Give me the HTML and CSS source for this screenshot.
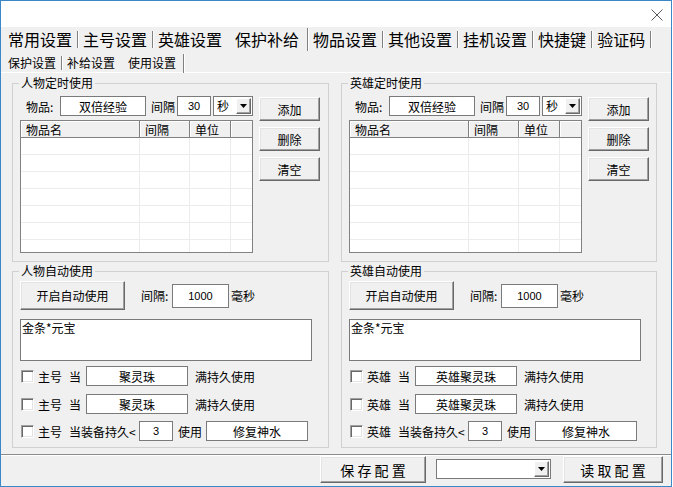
FILE: index.html
```html
<!DOCTYPE html>
<html lang="zh-CN">
<head>
    <meta charset="UTF-8">
    <title>保护补给</title>
    <link rel="stylesheet" href="styles.css">
</head>
<body>
<div class="window">
    <div class="titlebar">
        <span class="close-btn" title="关闭">
            <svg width="12" height="12" viewBox="0 0 12 12"><path d="M0.5 0.5L11.5 11.5M11.5 0.5L0.5 11.5" stroke="#5a5a5a" stroke-width="1" fill="none"/></svg>
        </span>
    </div>

    <div class="tabs main-tabs">
        <span class="tab">常用设置</span>
        <span class="tab">主号设置</span>
        <span class="tab before-active">英雄设置</span>
        <span class="tab active">保护补给</span>
        <span class="tab">物品设置</span>
        <span class="tab">其他设置</span>
        <span class="tab">挂机设置</span>
        <span class="tab">快捷键</span>
        <span class="tab">验证码</span>
    </div>
    <div class="tabs sub-tabs">
        <span class="tab">保护设置</span>
        <span class="tab before-active">补给设置</span>
        <span class="tab active">使用设置</span>
    </div>

    <div class="panel">
        <!-- 定时使用 -->
        <fieldset class="group">
            <legend>人物定时使用</legend>
            <div class="timed-body">
                <div class="timed-left">
                    <div class="item-row">
                        <label class="item-label">物品:</label>
                        <input class="edit item-name" type="text" value="双倍经验">
                        <span class="gap-label">间隔</span>
                        <input class="edit num small" type="text" value="30">
                        <div class="combo unit"><span class="combo-text">秒</span><span class="drop-btn"><svg width="7" height="4" viewBox="0 0 7 4"><path d="M0 0H7L3.5 4Z" fill="#000"/></svg></span></div>
                    </div>
                    <div class="listview">
                        <table>
                            <colgroup><col class="c-name"><col class="c-gap"><col class="c-unit"><col></colgroup>
                            <thead><tr><th>物品名</th><th>间隔</th><th>单位</th><th class="blank"></th></tr></thead>
                            <tbody>
                                <tr><td></td><td></td><td></td><td></td></tr>
                                <tr><td></td><td></td><td></td><td></td></tr>
                                <tr><td></td><td></td><td></td><td></td></tr>
                                <tr><td></td><td></td><td></td><td></td></tr>
                                <tr><td></td><td></td><td></td><td></td></tr>
                                <tr><td></td><td></td><td></td><td></td></tr>
                                <tr><td></td><td></td><td></td><td></td></tr>
                            </tbody>
                        </table>
                    </div>
                </div>
                <div class="btn-col">
                    <button class="btn">添加</button>
                    <button class="btn">删除</button>
                    <button class="btn">清空</button>
                </div>
            </div>
        </fieldset>

        <fieldset class="group">
            <legend>英雄定时使用</legend>
            <div class="timed-body">
                <div class="timed-left">
                    <div class="item-row">
                        <label class="item-label">物品:</label>
                        <input class="edit item-name" type="text" value="双倍经验">
                        <span class="gap-label">间隔</span>
                        <input class="edit num small" type="text" value="30">
                        <div class="combo unit"><span class="combo-text">秒</span><span class="drop-btn"><svg width="7" height="4" viewBox="0 0 7 4"><path d="M0 0H7L3.5 4Z" fill="#000"/></svg></span></div>
                    </div>
                    <div class="listview">
                        <table>
                            <colgroup><col class="c-name"><col class="c-gap"><col class="c-unit"><col></colgroup>
                            <thead><tr><th>物品名</th><th>间隔</th><th>单位</th><th class="blank"></th></tr></thead>
                            <tbody>
                                <tr><td></td><td></td><td></td><td></td></tr>
                                <tr><td></td><td></td><td></td><td></td></tr>
                                <tr><td></td><td></td><td></td><td></td></tr>
                                <tr><td></td><td></td><td></td><td></td></tr>
                                <tr><td></td><td></td><td></td><td></td></tr>
                                <tr><td></td><td></td><td></td><td></td></tr>
                                <tr><td></td><td></td><td></td><td></td></tr>
                            </tbody>
                        </table>
                    </div>
                </div>
                <div class="btn-col">
                    <button class="btn">添加</button>
                    <button class="btn">删除</button>
                    <button class="btn">清空</button>
                </div>
            </div>
        </fieldset>

        <!-- 自动使用 -->
        <fieldset class="group">
            <legend>人物自动使用</legend>
            <div class="auto-body">
                <div class="auto-top">
                    <button class="btn btn-auto">开启自动使用</button>
                    <span class="auto-gap">间隔:</span>
                    <input class="edit num ms" type="text" value="1000">
                    <span class="ms-label">毫秒</span>
                </div>
                <textarea class="memo">金条*元宝</textarea>
                <div class="check-row">
                    <input type="checkbox" class="check">
                    <span class="who">主号</span>
                    <span class="when">当</span>
                    <input class="edit wide" type="text" value="聚灵珠">
                    <span class="after">满持久使用</span>
                </div>
                <div class="check-row row2">
                    <input type="checkbox" class="check">
                    <span class="who">主号</span>
                    <span class="when">当</span>
                    <input class="edit wide" type="text" value="聚灵珠">
                    <span class="after">满持久使用</span>
                </div>
                <div class="check-row row3">
                    <input type="checkbox" class="check">
                    <span class="who">主号</span>
                    <span class="when when-long">当装备持久&lt;</span>
                    <input class="edit num small" type="text" value="3">
                    <span class="use">使用</span>
                    <input class="edit wide" type="text" value="修复神水">
                </div>
            </div>
        </fieldset>

        <fieldset class="group">
            <legend>英雄自动使用</legend>
            <div class="auto-body">
                <div class="auto-top">
                    <button class="btn btn-auto">开启自动使用</button>
                    <span class="auto-gap">间隔:</span>
                    <input class="edit num ms" type="text" value="1000">
                    <span class="ms-label">毫秒</span>
                </div>
                <textarea class="memo">金条*元宝</textarea>
                <div class="check-row">
                    <input type="checkbox" class="check">
                    <span class="who">英雄</span>
                    <span class="when">当</span>
                    <input class="edit wide" type="text" value="英雄聚灵珠">
                    <span class="after">满持久使用</span>
                </div>
                <div class="check-row row2">
                    <input type="checkbox" class="check">
                    <span class="who">英雄</span>
                    <span class="when">当</span>
                    <input class="edit wide" type="text" value="英雄聚灵珠">
                    <span class="after">满持久使用</span>
                </div>
                <div class="check-row row3">
                    <input type="checkbox" class="check">
                    <span class="who">英雄</span>
                    <span class="when when-long">当装备持久&lt;</span>
                    <input class="edit num small" type="text" value="3">
                    <span class="use">使用</span>
                    <input class="edit wide" type="text" value="修复神水">
                </div>
            </div>
        </fieldset>
    </div>

    <div class="footer">
        <button class="btn btn-save">保 存 配 置</button>
        <div class="combo config"><span class="combo-text"></span><span class="drop-btn"><svg width="7" height="4" viewBox="0 0 7 4"><path d="M0 0H7L3.5 4Z" fill="#000"/></svg></span></div>
        <button class="btn btn-load">读 取 配 置</button>
    </div>
</div>
</body>
</html>
```

FILE: styles.css
```css
* {
    box-sizing: border-box;
}

body {
    margin: 0;
    background-color: #ffffff;
    font-family: "Noto Sans CJK SC", "Noto Sans", sans-serif;
    font-size: 12px;
    color: #000000;
}

.window {
    width: 672px;
    height: 487px;
    border: 1px solid #3a88c8;
    background-color: #f0f0f0;
    display: flex;
    flex-direction: column;
}

.titlebar {
    height: 26px;
    flex: none;
    background-color: #ffffff;
    display: flex;
    justify-content: flex-end;
    align-items: center;
    padding-right: 8px;
}

.close-btn {
    display: flex;
    margin-top: 1px;
}

/* tab strips */
.tabs {
    display: flex;
    flex: none;
}

.main-tabs {
    height: 24px;
    font-size: 16px;
    line-height: 20px;
}

.sub-tabs {
    height: 22px;
    font-size: 12px;
    line-height: 14px;
    padding-top: 3px;
    border-bottom: 1px solid #ffffff;
}

.tab {
    display: flex;
    align-items: center;
    padding-left: 4px;
    white-space: nowrap;
}

.tab:first-child {
    padding-left: 7px;
}

.tab::after {
    content: "";
    width: 0;
    height: 17px;
    margin-left: 5px;
    border-left: 1px solid #808080;
    border-right: 1px solid #ffffff;
}

.tab.before-active::after {
    border-color: transparent;
}

.main-tabs .tab.active {
    padding-left: 6px;
}

.main-tabs .tab.active::after {
    height: 23px;
    margin-left: 8px;
}

.sub-tabs .tab::after {
    height: 14px;
}

.sub-tabs .tab.active {
    padding-left: 6px;
}

.sub-tabs .tab.active::after {
    height: 19px;
    margin-left: 7px;
}

/* main panel */
.panel {
    flex: 1;
    display: grid;
    grid-template-columns: 317px 316px;
    grid-template-rows: auto auto;
    column-gap: 12px;
    row-gap: 2px;
    align-content: start;
    padding: 3px 0 0 11px;
}

.group {
    margin: 0;
    padding: 0;
    min-width: 0;
    border: 1px solid #d0d0d0;
}

.group legend {
    margin-left: 6px;
    padding: 0 2px;
    font-size: 12px;
    line-height: 14px;
}

.timed-body {
    display: flex;
    padding: 6px 0 8px 7px;
}

.timed-left {
    width: 233px;
    display: flex;
    flex-direction: column;
}

.item-row {
    display: flex;
    align-items: center;
    height: 20px;
    margin-bottom: 4px;
    padding-left: 6px;
}

.item-label {
    width: 34px;
}

.gap-label {
    margin: 0 2px 0 5px;
}

/* edit boxes */
.edit {
    height: 20px;
    margin: 0;
    padding: 0 2px;
    border: 1px solid #7a7a7a;
    background-color: #ffffff;
    font-family: inherit;
    font-size: 12px;
    color: #000000;
    text-align: center;
    outline: none;
}

.item-name {
    width: 86px;
}

.num {
    font-family: "Liberation Sans", "Arial", sans-serif;
    font-size: 11px;
}

.small {
    width: 34px;
}

.wide {
    width: 102px;
}

/* combo boxes */
.combo {
    display: flex;
    align-items: center;
    justify-content: space-between;
    height: 20px;
    border: 1px solid #7a7a7a;
    background-color: #ffffff;
    padding: 1px;
}

.unit {
    width: 40px;
    margin-left: 2px;
}

.combo-text {
    padding-left: 2px;
    line-height: 14px;
}

.drop-btn {
    width: 15px;
    height: 16px;
    display: flex;
    align-items: center;
    justify-content: center;
    background-color: #f0f0f0;
    border: 1px solid;
    border-color: #ffffff #696969 #696969 #ffffff;
    box-shadow: inset -1px -1px #a0a0a0;
}

/* list view */
.listview {
    height: 133px;
    overflow: hidden;
    border: 1px solid #828282;
    background-color: #ffffff;
}

.listview table {
    width: 100%;
    table-layout: fixed;
    border-collapse: separate;
    border-spacing: 0;
}

.c-name {
    width: 119px;
}

.c-gap {
    width: 50px;
}

.c-unit {
    width: 41px;
}

.listview th {
    height: 17px;
    padding: 0 0 0 5px;
    font-weight: normal;
    font-size: 12px;
    line-height: 15px;
    text-align: left;
    background-color: #f0f0f0;
    border-right: 1px solid #808080;
    border-bottom: 1px solid #808080;
    box-shadow: inset 1px 1px #ffffff;
}

.listview th.blank {
    border-right: none;
}

.listview td {
    height: 17px;
    padding: 0;
    border-right: 1px solid #ececec;
    border-bottom: 1px solid #ececec;
}

.listview td:last-child {
    border-right: none;
}

/* buttons */
.btn {
    margin: 0;
    padding: 0;
    font-family: inherit;
    font-size: 12px;
    color: #000000;
    background-color: #f0f0f0;
    border: 1px solid;
    border-color: #ffffff #696969 #696969 #ffffff;
    box-shadow: inset -1px -1px #a0a0a0, inset 1px 1px #e3e3e3;
    cursor: pointer;
}

.btn-col {
    display: flex;
    flex-direction: column;
    gap: 6px;
    margin-left: 6px;
    padding-top: 1px;
}

.btn-col .btn {
    width: 61px;
    height: 24px;
}

/* auto use */
.auto-body {
    display: flex;
    flex-direction: column;
    padding: 3px 0 6px 7px;
}

.auto-top {
    display: flex;
    align-items: center;
    height: 29px;
}

.btn-auto {
    width: 105px;
    height: 29px;
}

.auto-gap {
    width: 31px;
    margin-left: 16px;
}

.ms {
    width: 57px;
    height: 24px;
}

.ms-label {
    margin-left: 2px;
}

.memo {
    width: 292px;
    height: 42px;
    margin: 9px 0 0 0;
    padding: 0 1px;
    border: 1px solid #7a7a7a;
    font-family: inherit;
    font-size: 12px;
    line-height: 15px;
    resize: none;
    overflow: hidden;
    outline: none;
}

.check-row {
    display: flex;
    align-items: center;
    height: 20px;
    margin-top: 5px;
}

.check-row.row2 {
    margin-top: 8px;
}

.check-row.row3 {
    margin-top: 7px;
}

.check {
    appearance: none;
    width: 13px;
    height: 13px;
    margin: 0 0 0 1px;
    background-color: #ffffff;
    border: 1px solid;
    border-color: #a0a0a0 #ffffff #ffffff #a0a0a0;
    box-shadow: inset 1px 1px #696969, inset -1px -1px #e3e3e3;
}

.who {
    margin-left: 4px;
}

.when {
    margin-left: 7px;
    width: 17px;
}

.when-long {
    width: 70px;
}

.after {
    margin-left: 7px;
}

.use {
    margin: 0 4px 0 5px;
}

/* footer */
.footer {
    height: 32px;
    flex: none;
    display: flex;
    justify-content: flex-end;
    align-items: flex-start;
    padding: 1px 8px 0 0;
    border-top: 1px solid #8c8c8c;
    box-shadow: inset 0 1px #ffffff;
}

.btn-save,
.btn-load {
    height: 27px;
    font-size: 14px;
}

.btn-save {
    width: 106px;
}

.btn-load {
    width: 100px;
    margin-left: 12px;
}

.config {
    width: 115px;
    height: 20px;
    margin: 3px 0 0 10px;
}
```
